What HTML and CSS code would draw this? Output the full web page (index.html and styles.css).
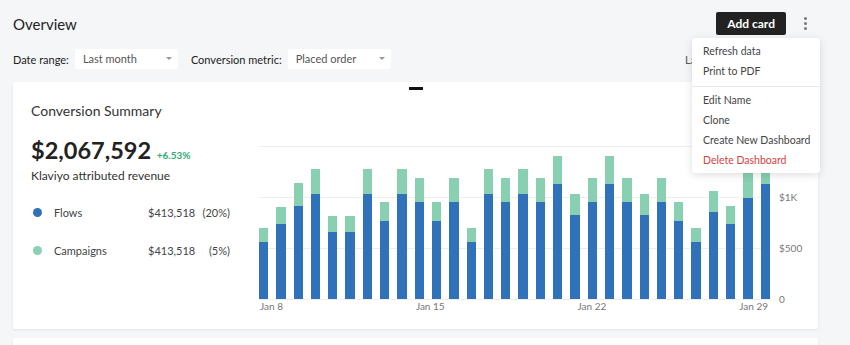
FILE: index.html
```html
<!DOCTYPE html>
<html>
<head>
  <title>Overview</title>
  <link rel="stylesheet" href="styles.css">
</head>
<body>
  <div class="page">
    <div class="header">
      <h1>Overview</h1>
      <div class="actions">
        <button class="add-btn">Add card</button>
        <button class="kebab"><span></span><span></span><span></span></button>
        <div class="menu">
          <div class="menu-group">
            <div class="menu-item">Refresh data</div>
            <div class="menu-item">Print to PDF</div>
          </div>
          <div class="menu-group">
            <div class="menu-item">Edit Name</div>
            <div class="menu-item">Clone</div>
            <div class="menu-item">Create New Dashboard</div>
            <div class="menu-item danger">Delete Dashboard</div>
          </div>
        </div>
      </div>
    </div>

    <div class="filters">
      <label>Date range:</label>
      <div class="select">Last month<span class="caret"></span></div>
      <label>Conversion metric:</label>
      <div class="select">Placed order<span class="caret"></span></div>
      <div class="updated">Last updated 2 minutes ago</div>
    </div>

    <div class="card">
      <div class="handle"></div>
      <div class="summary">
        <h2>Conversion Summary</h2>
        <div class="revenue">$2,067,592 <span class="change">+6.53%</span></div>
        <div class="revenue-label">Klaviyo attributed revenue</div>
        <div class="legend">
          <div class="legend-row">
            <span class="dot flows"></span>
            <span>Flows</span>
            <span>$413,518</span>
            <span class="pct">(20%)</span>
          </div>
          <div class="legend-row">
            <span class="dot campaigns"></span>
            <span>Campaigns</span>
            <span>$413,518</span>
            <span class="pct">(5%)</span>
          </div>
        </div>
      </div>

      <div class="chart">
        <div class="chart-main">
          <div class="plot">
            <div class="bar"><div class="seg camp" style="height:14px"></div><div class="seg flow" style="height:57px"></div></div>
            <div class="bar"><div class="seg camp" style="height:17px"></div><div class="seg flow" style="height:75px"></div></div>
            <div class="bar"><div class="seg camp" style="height:23px"></div><div class="seg flow" style="height:93px"></div></div>
            <div class="bar"><div class="seg camp" style="height:25px"></div><div class="seg flow" style="height:105px"></div></div>
            <div class="bar"><div class="seg camp" style="height:16px"></div><div class="seg flow" style="height:67px"></div></div>
            <div class="bar"><div class="seg camp" style="height:16px"></div><div class="seg flow" style="height:67px"></div></div>
            <div class="bar"><div class="seg camp" style="height:25px"></div><div class="seg flow" style="height:105px"></div></div>
            <div class="bar"><div class="seg camp" style="height:19px"></div><div class="seg flow" style="height:78px"></div></div>
            <div class="bar"><div class="seg camp" style="height:25px"></div><div class="seg flow" style="height:105px"></div></div>
            <div class="bar"><div class="seg camp" style="height:24px"></div><div class="seg flow" style="height:97px"></div></div>
            <div class="bar"><div class="seg camp" style="height:19px"></div><div class="seg flow" style="height:78px"></div></div>
            <div class="bar"><div class="seg camp" style="height:24px"></div><div class="seg flow" style="height:97px"></div></div>
            <div class="bar"><div class="seg camp" style="height:14px"></div><div class="seg flow" style="height:57px"></div></div>
            <div class="bar"><div class="seg camp" style="height:25px"></div><div class="seg flow" style="height:105px"></div></div>
            <div class="bar"><div class="seg camp" style="height:24px"></div><div class="seg flow" style="height:97px"></div></div>
            <div class="bar"><div class="seg camp" style="height:25px"></div><div class="seg flow" style="height:105px"></div></div>
            <div class="bar"><div class="seg camp" style="height:24px"></div><div class="seg flow" style="height:97px"></div></div>
            <div class="bar"><div class="seg camp" style="height:28px"></div><div class="seg flow" style="height:115px"></div></div>
            <div class="bar"><div class="seg camp" style="height:21px"></div><div class="seg flow" style="height:84px"></div></div>
            <div class="bar"><div class="seg camp" style="height:24px"></div><div class="seg flow" style="height:97px"></div></div>
            <div class="bar"><div class="seg camp" style="height:28px"></div><div class="seg flow" style="height:115px"></div></div>
            <div class="bar"><div class="seg camp" style="height:24px"></div><div class="seg flow" style="height:97px"></div></div>
            <div class="bar"><div class="seg camp" style="height:21px"></div><div class="seg flow" style="height:84px"></div></div>
            <div class="bar"><div class="seg camp" style="height:24px"></div><div class="seg flow" style="height:97px"></div></div>
            <div class="bar"><div class="seg camp" style="height:19px"></div><div class="seg flow" style="height:78px"></div></div>
            <div class="bar"><div class="seg camp" style="height:14px"></div><div class="seg flow" style="height:57px"></div></div>
            <div class="bar"><div class="seg camp" style="height:21px"></div><div class="seg flow" style="height:87px"></div></div>
            <div class="bar"><div class="seg camp" style="height:18px"></div><div class="seg flow" style="height:75px"></div></div>
            <div class="bar"><div class="seg camp" style="height:30px"></div><div class="seg flow" style="height:101px"></div></div>
            <div class="bar"><div class="seg camp" style="height:28px"></div><div class="seg flow" style="height:115px"></div></div>
          </div>
          <div class="x-axis">
            <span>Jan 8</span>
            <span>Jan 15</span>
            <span>Jan 22</span>
            <span>Jan 29</span>
          </div>
        </div>
        <div class="y-axis">
          <span>$1.5K</span>
          <span>$1K</span>
          <span>$500</span>
          <span>0</span>
        </div>
      </div>
    </div>

    <div class="card card-next"></div>
  </div>
</body>
</html>
```

FILE: styles.css
```css
html, body {
  margin: 0;
  overflow: hidden;
}
body {
  font-family: Lato, "Liberation Sans", sans-serif;
  background-color: #f5f6f8;
  color: #333;
}
.page {
  padding: 12px 32px 0 13px;
}

/* header */
.header {
  display: flex;
  align-items: center;
  justify-content: space-between;
  height: 23px;
}
h1 {
  margin: 0;
  font-size: 15px;
  font-weight: 400;
  color: #222;
}
.actions {
  position: relative;
  display: flex;
  align-items: center;
  gap: 6px;
}
.add-btn {
  height: 23px;
  padding: 0 11px;
  border: none;
  border-radius: 2px;
  background-color: #222;
  color: white;
  font-family: inherit;
  font-size: 12px;
  font-weight: 700;
  cursor: pointer;
}
.kebab {
  width: 26px;
  height: 23px;
  padding: 0;
  border: none;
  background: none;
  display: flex;
  flex-direction: column;
  align-items: center;
  justify-content: center;
  gap: 2px;
}
.kebab span {
  width: 3px;
  height: 3px;
  border-radius: 50%;
  background-color: #777;
}

/* dropdown */
.menu {
  position: absolute;
  top: calc(100% + 3px);
  right: -2px;
  width: 128px;
  background: white;
  border-radius: 3px;
  box-shadow: 0 2px 8px rgba(0,0,0,0.13);
  padding: 3px 0 2px;
  z-index: 10;
}
.menu-group + .menu-group {
  border-top: 1px solid #e8e8e8;
  margin-top: 4px;
  padding-top: 3px;
}
.menu-item {
  height: 20.3px;
  line-height: 20px;
  padding-left: 11px;
  font-size: 10.5px;
  color: #444;
  white-space: nowrap;
}
.menu-item.danger {
  color: #d4443e;
}

/* filters */
.filters {
  display: flex;
  align-items: center;
  margin-top: 14px;
  height: 20px;
  font-size: 11px;
}
.filters label {
  font-size: 11px;
  color: #222;
  margin-right: 6px;
}
.select {
  position: relative;
  width: 103px;
  height: 20px;
  line-height: 20px;
  box-sizing: border-box;
  padding-left: 8px;
  margin-right: 13px;
  background: white;
  border-radius: 2px;
  color: #555;
}
.caret {
  position: absolute;
  right: 6px;
  top: 8px;
  border-left: 3px solid transparent;
  border-right: 3px solid transparent;
  border-top: 3px solid #999;
}
.updated {
  margin-left: auto;
  color: #555;
  white-space: nowrap;
}

/* card */
.card {
  position: relative;
  display: flex;
  margin-top: 13px;
  height: 247px;
  box-sizing: border-box;
  padding: 20px 0 0 18px;
  background: white;
  border-radius: 2px;
  box-shadow: 0 1px 3px rgba(0,0,0,0.08);
}
.card-next {
  margin-top: 9px;
  height: 60px;
}
.handle {
  position: absolute;
  top: 5px;
  left: 50%;
  width: 14px;
  height: 3px;
  margin-left: -7px;
  background-color: #111;
}
.summary {
  width: 228px;
}
h2 {
  margin: 0;
  font-size: 14px;
  line-height: 18px;
  font-weight: 400;
  color: #333;
}
.revenue {
  margin-top: 17px;
  font-size: 23.5px;
  line-height: 26px;
  font-weight: 700;
  color: #222;
}
.change {
  font-size: 10px;
  color: #2fab72;
}
.revenue-label {
  margin-top: 0;
  font-size: 12px;
  line-height: 16px;
  color: #333;
}
.legend {
  margin-top: 20px;
}
.legend-row {
  display: grid;
  grid-template-columns: 23px 94px 1fr auto;
  align-items: center;
  width: 199px;
  height: 16px;
  font-size: 11px;
  color: #444;
}
.legend-row + .legend-row {
  margin-top: 22px;
}
.dot {
  width: 9px;
  height: 9px;
  margin-left: 2px;
  border-radius: 50%;
}
.dot.flows {
  background-color: #2f72b9;
}
.dot.campaigns {
  background-color: #8bd1b3;
}
.pct {
  text-align: right;
}

/* chart */
.chart {
  flex: 1;
  display: flex;
  margin-top: 44px;
}
.chart-main {
  flex: 1;
}
.plot {
  display: flex;
  justify-content: space-between;
  align-items: flex-end;
  height: 153px;
  border-bottom: 1px solid #eee;
  background-image: repeating-linear-gradient(to bottom, #eee 0, #eee 1px, transparent 1px, transparent 51px);
}
.bar {
  width: 9.3px;
  display: flex;
  flex-direction: column;
}
.seg.camp {
  background-color: #88d0b1;
}
.seg.flow {
  background-color: #2f72b9;
}
.x-axis {
  display: flex;
  justify-content: space-between;
  padding: 0 2px 0 1px;
  font-size: 10px;
  line-height: 12px;
  color: #777;
}
.y-axis {
  width: 48px;
  box-sizing: border-box;
  padding-left: 9px;
  margin-top: -6px;
  height: 165px;
  display: flex;
  flex-direction: column;
  justify-content: space-between;
  font-size: 10px;
  line-height: 12px;
  color: #777;
}
```
